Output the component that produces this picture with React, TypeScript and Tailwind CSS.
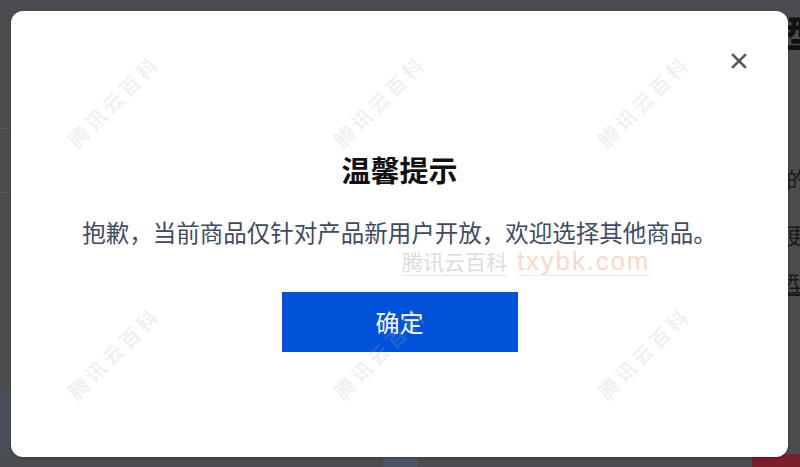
const marks = [
  "left-[114px] top-[101px]",
  "left-[380px] top-[101px]",
  "left-[644px] top-[101px]",
  "left-[114px] top-[353px]",
  "left-[380px] top-[353px]",
  "left-[644px] top-[353px]",
];

function CloseIcon() {
  return (
    <svg width="16" height="16" viewBox="0 0 16 16" fill="none">
      <path d="M2 2L14 14M14 2L2 14" stroke="#5a5a5a" strokeWidth="2.6" strokeLinecap="square" />
    </svg>
  );
}

export default function App() {
  return (
    <div
      className="relative w-[800px] h-[467px] overflow-hidden bg-[#4b4c50]"
      style={{ fontFamily: '"Noto Sans CJK SC", "Noto Sans", sans-serif' }}
    >
      {/* bits of the page behind the mask */}
      <div className="absolute left-0 top-[128px] w-[11px] h-px bg-[#5a5b5f]" />
      <div className="absolute left-0 top-[192px] w-[11px] h-px bg-[#5a5b5f]" />
      <div className="absolute left-0 top-[390px] w-[11px] h-[66px] bg-[#4a4e58]" />
      <div className="absolute left-[383px] top-[457px] w-[35px] h-[10px] bg-[#4c5366]" />
      <div className="absolute left-[752px] top-[454px] w-[48px] h-[13px] bg-[#7c1e2c]" />

      <div className="flex pt-[11px] pl-[11px]">
        <div className="relative shrink-0 w-[777px] h-[446px] rounded-[12px] bg-white shadow-[0_1px_3px_rgba(0,0,0,0.25)] flex flex-col items-center">
          <button className="absolute right-[41px] top-[42px] w-4 h-4 flex items-center justify-center">
            <CloseIcon />
          </button>

          <h2 className="mt-[141px] text-[29px] leading-[35px] font-bold text-[#111]">温馨提示</h2>

          <p className="mt-[29px] text-[23.5px] leading-[32px] text-[#3e4b63]">
            抱歉，当前商品仅针对产品新用户开放，欢迎选择其他商品。
          </p>

          <button className="mt-[44px] w-[236px] h-[60px] bg-[#0052d9] text-white text-[24px] leading-none flex items-center justify-center">
            确定
          </button>
        </div>

        <div className="flex flex-col shrink-0 pl-[-2px] -ml-[2px] leading-none text-[#1a1a1a] whitespace-nowrap">
          <span className="mt-[3px] text-[36px] font-black text-[#111]">型</span>
          <span className="mt-[117px] text-[22px]">的</span>
          <span className="mt-[34px] text-[22px]">更</span>
          <span className="mt-[26px] text-[22px] underline">型</span>
        </div>
      </div>

      {/* watermarks laid over the dialog */}
      {marks.map((pos, i) => (
        <div
          key={i}
          className={`absolute ${pos} -translate-x-1/2 -translate-y-1/2 -rotate-45 whitespace-nowrap text-[20px] font-bold tracking-[4px] leading-none text-[rgba(175,175,175,0.2)] pointer-events-none`}
        >
          腾讯云百科
        </div>
      ))}

      <div className="absolute left-[402px] top-[248px] flex items-end gap-[10px] leading-none pointer-events-none">
        <span className="text-[21px] text-[#dcdcdc] border-b border-[#e6e6e6] pb-[3px]">腾讯云百科</span>
        <span
          className="text-[26px] tracking-[1.8px] text-[#fcd7c8] border-b border-[#fde6dc] pb-[1px]"
          style={{ fontFamily: '"Liberation Sans", sans-serif' }}
        >
          txybk.com
        </span>
      </div>
    </div>
  );
}
